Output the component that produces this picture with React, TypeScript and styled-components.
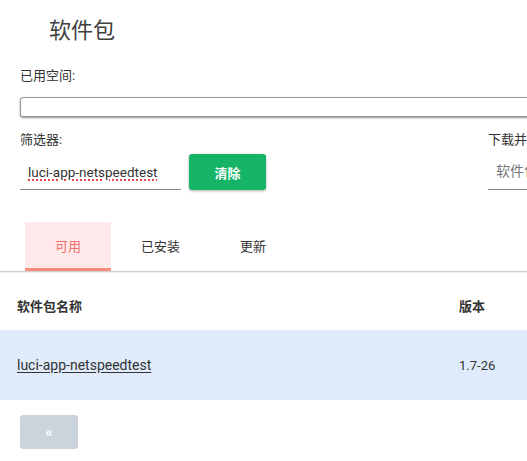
import React from "react";
import styled, { createGlobalStyle } from "styled-components";

const Global = createGlobalStyle`
  html, body { margin: 0; padding: 0; background: #fff; overflow: hidden; }
  body {
    font-family: Roboto, "Noto Sans CJK SC", "Noto Sans", sans-serif;
    color: #333;
    font-size: 13px;
  }
`;

const Page = styled.div`
  width: 680px;
`;

const Title = styled.h2`
  margin: 0;
  padding: 16px 0 0 49px;
  font-size: 22px;
  line-height: 30px;
  font-weight: 400;
  color: #404040;
`;

const Section = styled.div`
  padding: 20px 0 0 20px;
`;

const Label = styled.div`
  font-size: 13px;
  line-height: 20px;
  color: #333;
`;

const Progress = styled.div`
  margin-top: 11px;
  height: 18px;
  border: 1px solid #9a9a9a;
  border-radius: 3px;
  box-shadow: 0 1px 2px rgba(0, 0, 0, 0.45);
  background: #fff;
`;

const FilterRow = styled.div`
  margin-top: 13px;
  display: grid;
  grid-template-columns: 468px 1fr;
`;

const Field = styled.div`
  display: flex;
  flex-direction: column;
  gap: 4px;
`;

const Controls = styled.div`
  display: flex;
  gap: 8px;
  align-items: center;
`;

const TextInput = styled.input<{ $width: number }>`
  box-sizing: border-box;
  width: ${(p) => p.$width}px;
  height: 36px;
  border: none;
  border-bottom: 1px solid #8a8a8a;
  outline: none;
  padding: 0 8px;
  font-family: Roboto, "Noto Sans CJK SC", sans-serif;
  font-size: 13px;
  color: #333;
  background: transparent;
  &::placeholder { color: #777; font-size: 14px; }
`;

const FilterBox = styled.div<{ $width: number }>`
  box-sizing: border-box;
  width: ${(p) => p.$width}px;
  height: 36px;
  border-bottom: 1px solid #8a8a8a;
  padding: 0 8px;
  display: flex;
  align-items: center;
  font-size: 13.5px;
  color: #333;
  white-space: nowrap;
  overflow: hidden;
`;

const Misspelled = styled.span`
  text-decoration: underline dotted #e84a4a;
  text-decoration-thickness: 2px;
  text-underline-offset: 3px;
`;

const GreenButton = styled.button`
  width: 77px;
  height: 36px;
  border: none;
  border-radius: 3px;
  background: #15b467;
  color: #fff;
  font-family: "Noto Sans CJK SC", sans-serif;
  font-size: 13px;
  font-weight: 700;
  box-shadow: 0 1px 3px rgba(0, 0, 0, 0.3);
`;

const Tabs = styled.div`
  margin-top: 32px;
  display: flex;
  padding-left: 25px;
  border-bottom: 1px solid #cfcfcf;
  box-shadow: 0 1px 1px rgba(0, 0, 0, 0.06);
`;

const Tab = styled.div<{ $active?: boolean }>`
  height: 46px;
  padding: 0 30px;
  display: flex;
  align-items: center;
  font-size: 13px;
  color: ${(p) => (p.$active ? "#f0706a" : "#333")};
  background: ${(p) => (p.$active ? "#ffe9ea" : "transparent")};
  border-bottom: 3px solid ${(p) => (p.$active ? "#fa8a7c" : "transparent")};
`;

const Table = styled.div`
  margin-top: 8px;
  display: grid;
  grid-template-columns: 442px 1fr;
`;

const Cell = styled.div<{ $head?: boolean; $hl?: boolean }>`
  height: ${(p) => (p.$head ? 50 : 70)}px;
  display: flex;
  align-items: center;
  padding: 0 17px;
  font-size: 13px;
  font-weight: ${(p) => (p.$head ? 700 : 400)};
  color: #333;
  background: ${(p) => (p.$hl ? "#dfebfb" : "transparent")};
`;

const PkgLink = styled.a`
  color: #333;
  font-size: 14px;
  text-decoration: underline;
  text-underline-offset: 2px;
`;

const Pager = styled.div`
  padding: 15px 0 0 20px;
`;

const PageButton = styled.button`
  width: 58px;
  height: 34px;
  border: none;
  border-radius: 3px;
  background: #cbd4dc;
  color: #fff;
  font-size: 14px;
  font-weight: 700;
  font-family: Roboto, sans-serif;
`;

export default function App() {
  return (
    <Page>
      <Global />
      <Title>软件包</Title>
      <Section>
        <Label>已用空间:</Label>
        <Progress />
        <FilterRow>
          <Field>
            <Label>筛选器:</Label>
            <Controls>
              <FilterBox $width={161} role="textbox">
                <Misspelled>luci-app-netspeedtest</Misspelled>
              </FilterBox>
              <GreenButton>清除</GreenButton>
            </Controls>
          </Field>
          <Field>
            <Label>下载并安装软件包:</Label>
            <Controls>
              <TextInput $width={180} readOnly placeholder="软件包名称或 URL…" />
            </Controls>
          </Field>
        </FilterRow>
      </Section>
      <Tabs>
        <Tab $active>可用</Tab>
        <Tab>已安装</Tab>
        <Tab>更新</Tab>
      </Tabs>
      <Table>
        <Cell $head>软件包名称</Cell>
        <Cell $head>版本</Cell>
        <Cell $hl>
          <PkgLink href="#">luci-app-netspeedtest</PkgLink>
        </Cell>
        <Cell $hl>1.7-26</Cell>
      </Table>
      <Pager>
        <PageButton>«</PageButton>
      </Pager>
    </Page>
  );
}
